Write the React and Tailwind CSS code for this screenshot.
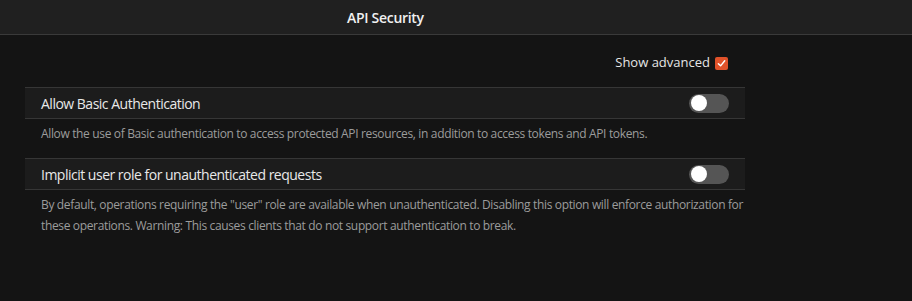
import React from 'react'

const settings = [
    {
        title: 'Allow Basic Authentication',
        description: 'Allow the use of Basic authentication to access protected API resources, in addition to access tokens and API tokens.',
    },
    {
        title: 'Implicit user role for unauthenticated requests',
        description: 'By default, operations requiring the "user" role are available when unauthenticated. Disabling this option will enforce authorization for these operations. Warning: This causes clients that do not support authentication to break.',
    },
]

function Toggle() {
    return (
        <div className="w-[40px] h-[19px] rounded-full bg-[#555555] flex items-center px-[2px]">
            <span className="w-[16px] h-[16px] rounded-full bg-white" />
        </div>
    )
}

export default function App() {
    return (
        <div className="w-[912px] h-[301px] bg-[#141414] font-['Open_Sans',sans-serif] overflow-hidden">
            {/* Header */}
            <div className="h-[35px] bg-[#202020] border-b border-[#3a3a3a] flex items-center pl-[347px]">
                <h1 className="text-[14px] font-semibold text-[#f0f0f0] tracking-[-0.3px]">API Security</h1>
            </div>

            <div className="ml-[25px] w-[720px]">
                {/* Show advanced */}
                <div className="flex items-center justify-end gap-[5px] pr-[17px] mt-[18px] h-[20px]">
                    <span className="text-[13px] text-[#e6e6e6]">Show advanced</span>
                    <span className="w-[13px] h-[13px] rounded-[2px] bg-[#e1522a] flex items-center justify-center">
                        <svg width="9" height="9" viewBox="0 0 10 10" fill="none">
                            <path d="M1.5 5.2 L4 7.6 L8.6 2" stroke="white" strokeWidth="1.6" strokeLinecap="round" strokeLinejoin="round" />
                        </svg>
                    </span>
                </div>

                {/* Settings */}
                <div className="mt-[14px] flex flex-col gap-[14px]">
                    {settings.map((s) => (
                        <div key={s.title}>
                            <div className="h-[32px] bg-[#1c1c1c] border-y border-[#363636] flex items-center justify-between pl-[16px] pr-[16px]">
                                <span className="text-[14px] text-[#e8e8e8] tracking-[-0.5px]">{s.title}</span>
                                <Toggle />
                            </div>
                            <p className="pl-[16px] pt-[4px] text-[12px] leading-[21px] text-[#9c9c9c] tracking-[-0.35px]">
                                {s.description}
                            </p>
                        </div>
                    ))}
                </div>
            </div>
        </div>
    )
}
